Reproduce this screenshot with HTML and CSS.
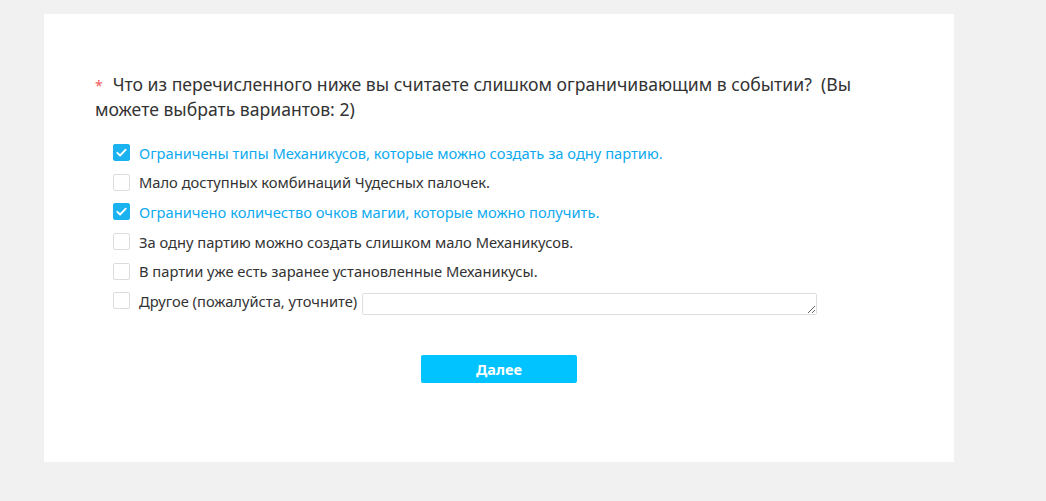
FILE: index.html
```html
<!DOCTYPE html>
<html lang="ru">
<head>
<meta charset="utf-8">
<link rel="stylesheet" href="styles.css">
</head>
<body>
<div class="card">
  <div class="question"><span class="req">*</span>Что из перечисленного ниже вы считаете слишком ограничивающим в событии?&nbsp; (Вы можете выбрать вариантов: 2)</div>
  <ul class="options">
    <li class="opt checked"><span class="box"><svg viewBox="0 0 17 17" width="17" height="17"><path d="M4.3 8.8l2.8 2.7 5.6-5.8" fill="none" stroke="#fff" stroke-width="1.8" stroke-linecap="round" stroke-linejoin="round"/></svg></span><span class="label">Ограничены типы Механикусов, которые можно создать за одну партию.</span></li>
    <li class="opt"><span class="box"></span><span class="label">Мало доступных комбинаций Чудесных палочек.</span></li>
    <li class="opt checked"><span class="box"><svg viewBox="0 0 17 17" width="17" height="17"><path d="M4.3 8.8l2.8 2.7 5.6-5.8" fill="none" stroke="#fff" stroke-width="1.8" stroke-linecap="round" stroke-linejoin="round"/></svg></span><span class="label">Ограничено количество очков магии, которые можно получить.</span></li>
    <li class="opt"><span class="box"></span><span class="label">За одну партию можно создать слишком мало Механикусов.</span></li>
    <li class="opt"><span class="box"></span><span class="label">В партии уже есть заранее установленные Механикусы.</span></li>
    <li class="opt"><span class="box"></span><span class="label">Другое (пожалуйста, уточните)</span><textarea class="other"></textarea></li>
  </ul>
  <div class="actions"><button class="next">Далее</button></div>
</div>
</body>
</html>
```

FILE: styles.css
```css
html, body {
  margin: 0;
  padding: 0;
  background: #f1f1f1;
}
body {
  font-family: "Noto Sans", "Open Sans", sans-serif;
  color: #333;
  padding: 14px 0 0 44px;
  height: 501px;
  box-sizing: border-box;
}
.card {
  width: 910px;
  height: 448px;
  background: #fff;
  box-sizing: border-box;
  padding: 58px 51px 0 51px;
}
.question {
  font-size: 17.6px;
  line-height: 25px;
  color: #333;
  width: 790px;
}
.req {
  color: #f05a5a;
  margin-right: 10px;
  font-size: 14px;
  line-height: 14px;
}
.options {
  list-style: none;
  margin: 16px 0 0 18px;
  padding: 0;
}
.opt {
  display: flex;
  align-items: center;
  height: 29.6px;
  font-size: 14.7px;
  color: #333;
}
.box {
  width: 17px;
  height: 17px;
  border: 1px solid #dcdcdc;
  border-radius: 2px;
  box-sizing: border-box;
  margin-right: 9px;
  display: flex;
  align-items: center;
  justify-content: center;
  flex: none;
}
.box svg { display: block; flex: none; }
.checked .box {
  background: #1ab3f0;
  border-color: #1ab3f0;
}
.checked .label {
  color: #0eaaf0;
}
.other {
  margin: 6px 0 0 5px;
  width: 455px;
  height: 22px;
  box-sizing: border-box;
  border: 1px solid #dedede;
  border-radius: 2px;
  padding: 2px 4px;
  font-family: inherit;
  font-size: 13px;
}
.actions {
  display: flex;
  justify-content: center;
  margin-top: 39px;
}
.next {
  width: 156px;
  height: 28px;
  border: none;
  border-radius: 2px;
  background: #00c3ff;
  color: #fff;
  font-family: inherit;
  font-size: 14.5px;
  font-weight: 700;
}
```
